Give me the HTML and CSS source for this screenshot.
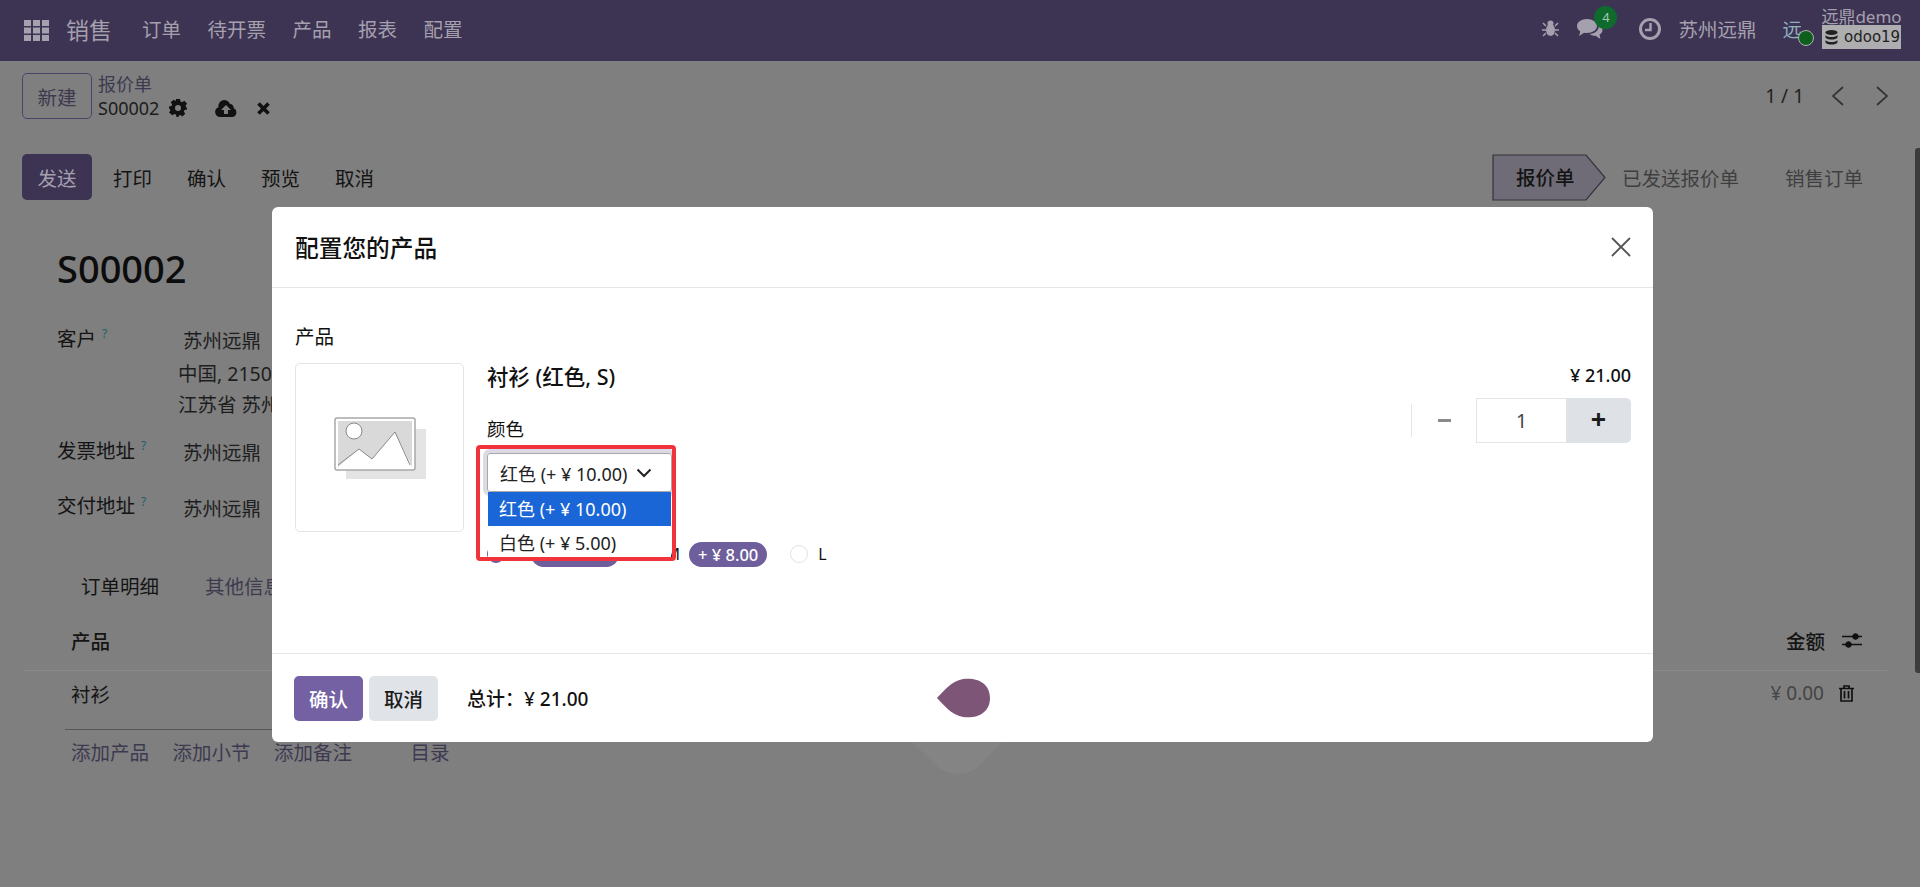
FILE: index.html
```html
<!DOCTYPE html>
<html lang="zh-CN">
<head>
    <meta charset="UTF-8">
    <title>报价单 S00002</title>
    <link rel="stylesheet" href="styles.css">
</head>
<body>
    <!-- Top bar -->
    <header class="navbar">
        <svg class="apps" width="25" height="21" viewBox="0 0 25 21" fill="#a5a0ae">
            <rect x="0" y="0" width="7" height="6"/><rect x="9" y="0" width="7" height="6"/><rect x="18" y="0" width="7" height="6"/>
            <rect x="0" y="7.500" width="7" height="6"/><rect x="9" y="7.500" width="7" height="6"/><rect x="18" y="7.500" width="7" height="6"/>
            <rect x="0" y="15" width="7" height="6"/><rect x="9" y="15" width="7" height="6"/><rect x="18" y="15" width="7" height="6"/>
        </svg>
        <span class="brand">销售</span>
        <nav class="menu">
            <span>订单</span><span>待开票</span><span>产品</span><span>报表</span><span>配置</span>
        </nav>
        <div class="systray">
            <svg class="bug" width="17" height="17" viewBox="0 0 17 17" fill="#a5a0ae">
                <ellipse cx="8.500" cy="10" rx="4.500" ry="6"/><circle cx="8.500" cy="3.500" r="3"/>
                <path d="M1 3l3 3M16 3l-3 3M0 10h4M17 10h-4M1 16l3-3M16 16l-3-3" stroke="#a5a0ae" stroke-width="1.500"/>
            </svg>
            <div class="chat">
                <svg width="27" height="24" viewBox="0 0 27 24" fill="#a5a0ae">
                    <path d="M11 2c5.500 0 10 3 10 7s-4.500 7-10 7c-1 0-2-.1-3-.3L3 19l1.300-4.500C2 13 1 11 1 9c0-4 4.500-7 10-7z"/>
                    <path d="M23 8c2 1.200 3.500 3 3.500 5 0 2-1.200 3.500-3 4.600l1 4.400-5-3.300c-2.500 0-4.600-.7-6-1.800 5.500 0 9.500-3.500 9.500-8.900z"/>
                </svg>
                <span class="badge">4</span>
            </div>
            <svg class="clock" width="24" height="24" viewBox="0 0 24 24" fill="none" stroke="#a5a0ae" stroke-width="3">
                <circle cx="12" cy="12" r="9.500"/><path d="M12.500 6v7H7" stroke-width="2.500"/>
            </svg>
            <span class="company">苏州远鼎</span>
            <div class="avatar">远<i class="online"></i></div>
            <div class="dbinfo">
                <span class="dbuser">远鼎demo</span>
                <span class="dbname">
                    <svg width="13" height="15" viewBox="0 0 13 15" fill="#222"><ellipse cx="6.500" cy="2.500" rx="6" ry="2.500"/><path d="M.5 5c1 1.500 3 2 6 2s5-.5 6-2v2.500c-1 1.500-3 2-6 2s-5-.5-6-2zM.5 10c1 1.500 3 2 6 2s5-.5 6-2v2.500c-1 1.500-3 2-6 2s-5-.5-6-2z"/></svg>
                    odoo19
                </span>
            </div>
        </div>
    </header>

    <!-- Control panel -->
    <section class="control">
        <button class="btn btn-outline">新建</button>
        <div class="crumbs">
            <span class="crumb-link">报价单</span>
            <div class="crumb-current">
                <span>S00002</span>
                <svg class="gear" width="18" height="18" viewBox="0 0 18 18" fill="#111">
                    <path fill-rule="evenodd" d="M7 0h4l.5 2.500 1.600.7 2.200-1.400 2.700 2.800-1.400 2.100.7 1.700L18 9v0l0 1.500-2.500.5-.7 1.600 1.400 2.200-2.800 2.700-2.100-1.400-1.300.5L9.500 18h-2l-.5-2.500-1.600-.6-2.100 1.400L0 13.500l1.400-2.100-.6-1.400L0 9.500v-2l2.500-.5.6-1.500L1.800 3.300 4.500.7l2.100 1.400z M9 6a3 3 0 1 0 0 6a3 3 0 0 0 0-6z"/>
                </svg>
                <svg class="cloud" width="22" height="17" viewBox="0 0 22 17" fill="#111">
                    <path fill-rule="evenodd" d="M5 17a5 5 0 0 1-1.500-9.700A6 6 0 0 1 15 4a3.500 3.500 0 0 1 3.600 4A4.700 4.700 0 0 1 17 17z M11 5l-5 5h3v4h4v-4h3z"/>
                </svg>
                <svg class="cross" width="13" height="13" viewBox="0 0 13 13" stroke="#111" stroke-width="3.600"><path d="M1.500 1.500l10 10M11.500 1.500l-10 10"/></svg>
            </div>
        </div>
        <div class="pager">
            <span>1 / 1</span>
            <svg width="14" height="20" viewBox="0 0 14 20" fill="none" stroke="#333" stroke-width="1.700"><path d="M12 1L2 10l10 9"/></svg>
            <svg width="14" height="20" viewBox="0 0 14 20" fill="none" stroke="#333" stroke-width="1.700"><path d="M2 1l10 9-10 9"/></svg>
        </div>
    </section>

    <section class="actions">
        <button class="btn btn-send">发送</button>
        <span class="action">打印</span>
        <span class="action">确认</span>
        <span class="action">预览</span>
        <span class="action">取消</span>
        <div class="status">
            <div class="status-current">
                <svg width="115" height="47" viewBox="0 0 115 47" fill="#6f6c78" stroke="#34323c" stroke-width="1.200"><path d="M1 1h93l19 22.500L94 46H1z"/></svg>
                <span>报价单</span>
            </div>
            <span class="status-next">已发送报价单</span>
            <span class="status-next">销售订单</span>
        </div>
    </section>

    <!-- Sale order form behind the dialog -->
    <main class="sheet">
        <h1 class="order-name">S00002</h1>
        <div class="field">
            <div class="field-label">客户<sup>?</sup></div>
            <div class="field-value">
                <div class="partner">苏州远鼎</div>
                <div>中国, 215000</div>
                <div>江苏省 苏州市</div>
            </div>
        </div>
        <div class="field field-second">
            <div class="field-label">发票地址<sup>?</sup></div>
            <div class="field-value"><div class="partner">苏州远鼎</div></div>
        </div>
        <div class="field field-third">
            <div class="field-label">交付地址<sup>?</sup></div>
            <div class="field-value"><div class="partner">苏州远鼎</div></div>
        </div>

        <div class="tabs">
            <span>订单明细</span>
            <span class="tab-off">其他信息</span>
        </div>

        <div class="lines-head">
            <span class="cell-name">产品</span>
            <span class="cell-total">金额</span>
            <svg width="20" height="17" viewBox="0 0 20 17" fill="#111" stroke="#111">
                <path d="M0 4.500h20M0 12.500h20" stroke-width="1.300"/><circle cx="13.500" cy="4.500" r="2.800"/><circle cx="6.500" cy="12.500" r="2.800"/>
            </svg>
        </div>
        <div class="lines-row">
            <span class="cell-name">衬衫</span>
            <span class="cell-price">¥ 0.00</span>
            <svg width="15" height="17" viewBox="0 0 15 17" fill="none" stroke="#111" stroke-width="1.700">
                <path d="M0 3.500h15M5 3.500V1h5v2.500M2 3.500V16h11V3.500M5.500 6v7.500M9.500 6v7.500"/>
            </svg>
        </div>
        <div class="lines-rule"></div>
        <div class="add-links">
            <span>添加产品</span><span>添加小节</span><span>添加备注</span><span class="catalog">目录</span>
        </div>
    </main>

    <div class="scrollbar"></div>

    <!-- Dialog -->
    <div class="modal">
        <div class="modal-head">
            <h2>配置您的产品</h2>
            <svg width="22" height="22" viewBox="0 0 22 22" stroke="#555" stroke-width="1.800"><path d="M2 2l18 18M20 2L2 20"/></svg>
        </div>
        <div class="modal-body">
            <div class="section-label">产品</div>
            <div class="product">
                <div class="thumb">
                    <svg width="92" height="62" viewBox="0 0 92 62">
                        <rect x="12" y="12" width="80" height="50" fill="#e4e4e4"/>
                        <rect x="1" y="1" width="80" height="52" rx="2" fill="#fff" stroke="#a8a8a8" stroke-width="1.500"/>
                        <rect x="4" y="4" width="74" height="46" fill="#d9d9d9"/>
                        <path d="M4 50l21-18 13 10 23-27 17 35z" fill="#fff"/>
                        <path d="M4 48l21-16 13 10 23-27 15 33" fill="none" stroke="#888"/>
                        <circle cx="20" cy="14" r="8" fill="#fff" stroke="#888"/>
                    </svg>
                </div>
                <div class="product-info">
                    <div class="product-name">衬衫 (红色, S)</div>
                    <div class="attr-label">颜色</div>
                    <div class="select-wrap">
                        <div class="select">
                            <span>红色 (+ ¥ 10.00)</span>
                            <svg width="16" height="10" viewBox="0 0 16 10" fill="none" stroke="#222" stroke-width="2"><path d="M1.500 1.500L8 8l6.500-6.500"/></svg>
                        </div>
                        <div class="options">
                            <div class="option option-on">红色 (+ ¥ 10.00)</div>
                            <div class="option">白色 (+ ¥ 5.00)</div>
                        </div>
                        <div class="redframe"></div>
                    </div>
                    <div class="sizes">
                        <i class="radio radio-on"></i>
                        <span class="size">S</span>
                        <span class="pill">+ ¥ 10.00</span>
                        <span class="size size-m">M</span>
                        <span class="pill pill-m">+ ¥ 8.00</span>
                        <i class="radio radio-l"></i>
                        <span class="size">L</span>
                    </div>
                </div>
                <div class="buy">
                    <div class="price">¥ 21.00</div>
                    <div class="qty">
                        <span class="qty-minus"><i></i></span>
                        <span class="qty-input">1</span>
                        <span class="qty-plus">+</span>
                    </div>
                </div>
            </div>
        </div>
        <div class="modal-foot">
            <button class="btn btn-ok">确认</button>
            <button class="btn btn-cancel">取消</button>
            <span class="total">总计：¥ 21.00</span>
            <svg class="cursor-drop" width="54" height="40" viewBox="0 0 54 40"><path d="M0 20C6 14 14 3 26 1c14-2 27 4 27 19s-13 21-27 19C14 37 6 26 0 20z" fill="#7c5577"/></svg>
        </div>
    </div>
    <svg class="smear" width="90" height="32" viewBox="0 0 90 32"><path d="M0 0h90L65 26c-12 8-25 8-38 0z" fill="#848484"/></svg>
</body>
</html>
```

FILE: styles.css
```css
* {
    box-sizing: border-box;
}

body {
    margin: 0;
    height: 887px;
    overflow: hidden;
    position: relative;
    background: #7f7f7f;
    color: #141414;
    font-family: "Noto Sans", "Noto Sans CJK SC", sans-serif;
    font-size: 19.5px;
}

.btn {
    font: inherit;
    border: none;
    border-radius: 5px;
    cursor: pointer;
}

/* top bar */
.navbar {
    display: flex;
    align-items: center;
    height: 61px;
    padding: 0 19px 4px 24px;
    background: #3d3353;
    color: #a5a0ae;
}

.apps {
    margin-top: 4px;
}

.brand {
    margin-left: 17px;
    font-size: 23px;
}

.menu {
    display: flex;
    gap: 26.5px;
    margin-left: 30px;
}

.systray {
    display: flex;
    align-items: center;
    margin-left: auto;
}

.bug {
    margin-right: 17px;
}

.chat {
    position: relative;
    width: 27px;
    height: 24px;
    margin-right: 35px;
}

.badge {
    position: absolute;
    left: 18px;
    top: -11px;
    width: 23px;
    height: 23px;
    border-radius: 50%;
    background: #0f6a2e;
    color: #a5c9ae;
    font-size: 13px;
    line-height: 23px;
    text-align: center;
}

.clock {
    margin-right: 16px;
}

.avatar {
    position: relative;
    margin-left: 26px;
    color: #8fb0bd;
}

.online {
    position: absolute;
    right: -12px;
    bottom: -3px;
    width: 16px;
    height: 16px;
    border-radius: 50%;
    background: #0d5f1b;
    border: 1px solid #b0b0b0;
}

.dbinfo {
    display: flex;
    flex-direction: column;
    align-items: center;
    margin-left: 20px;
    width: 79px;
}

.dbuser {
    font-size: 17px;
    line-height: 17px;
    height: 17px;
    white-space: nowrap;
}

.dbname {
    display: flex;
    align-items: center;
    gap: 6px;
    width: 79px;
    height: 24px;
    padding-left: 3px;
    background: #aeaeb0;
    color: #222;
    font-family: "DejaVu Sans", sans-serif;
    font-size: 15px;
}

/* control panel */
.control {
    display: flex;
    align-items: flex-start;
    margin-top: 12px;
    padding: 0 22px;
}

.btn-outline {
    width: 70px;
    height: 46px;
    background: transparent;
    border: 1px solid #49456a;
    color: #3d3a50;
}

.crumbs {
    display: flex;
    flex-direction: column;
    margin: -1px 0 0 6px;
    font-size: 18px;
    line-height: 24px;
}

.crumb-link {
    color: #3d3a50;
}

.crumb-current {
    display: flex;
    align-items: center;
    height: 24px;
    color: #1c1c1c;
}

.gear {
    margin-left: 10px;
}

.cloud {
    margin-left: 28px;
}

.cross {
    margin-left: 20px;
}

.pager {
    display: flex;
    align-items: center;
    margin-left: auto;
    height: 46px;
    padding-right: 9px;
    gap: 27px;
    color: #222;
    font-size: 19px;
}

.pager svg + svg {
    margin-left: 3px;
}

.actions {
    display: flex;
    align-items: center;
    height: 46px;
    margin-top: 34px;
    padding-left: 22px;
}

.btn-send {
    width: 70px;
    height: 46px;
    background: #3d3353;
    color: #a5a0ae;
    margin-right: 21px;
}

.action {
    margin-right: 35px;
}

.status {
    display: flex;
    align-items: center;
    margin-left: auto;
    padding-right: 57px;
}

.status-current {
    position: relative;
    width: 115px;
    height: 47px;
}

.status-current span {
    position: absolute;
    left: 24px;
    top: 0;
    line-height: 47px;
    font-weight: 500;
}

.status-next {
    margin-left: 15px;
    color: #3f3f3f;
}

.status-next + .status-next {
    margin-left: 46px;
}

/* form */
.sheet {
    padding-top: 43px;
}

.order-name {
    margin: 0 0 0 57px;
    font-size: 38px;
    font-weight: 500;
    line-height: 50px;
    color: #0c0c0c;
}

.field {
    display: flex;
    margin: 32px 0 0 57px;
    line-height: 31px;
}

.field-second {
    margin-top: 17px;
}

.field-third {
    margin-top: 22.5px;
}

.field-label {
    width: 121px;
    margin-top: -2.5px;
}

.field-label sup {
    margin-left: 6px;
    font-size: 12px;
    line-height: 0;
    color: #1c5e66;
}

.field-value {
    color: #1e1e1e;
}

.partner {
    padding-left: 5px;
    margin-bottom: 2px;
}

.tabs {
    display: flex;
    gap: 46px;
    margin: 46px 0 0 81px;
    line-height: 30px;
}

.tab-off {
    color: #3d3a50;
}

.lines-head {
    display: flex;
    align-items: center;
    height: 45.5px;
    margin: 24px 33px 0 24px;
    padding: 0 25px 15.5px 47px;
    border-bottom: 1px solid #8b8b8b;
    font-weight: 500;
}

.lines-row {
    display: flex;
    align-items: center;
    height: 58px;
    margin: 0 33px 0 65px;
    padding: 0 33px 14px 6px;
}

.lines-rule {
    width: 300px;
    margin-left: 65px;
    border-top: 1px solid #565656;
}

.cell-total {
    margin-left: auto;
    margin-right: 17px;
}

.cell-price {
    margin-left: auto;
    margin-right: 15px;
    color: #444;
    font-size: 19px;
}

.add-links {
    display: flex;
    gap: 23.5px;
    margin: 8px 0 0 71px;
    line-height: 30px;
    color: #3d3a50;
}

.catalog {
    margin-left: 35px;
}

.scrollbar {
    position: absolute;
    right: 0;
    top: 148px;
    width: 5px;
    height: 525px;
    background: #3c3c3c;
    border-radius: 3px 0 0 3px;
}

/* dialog */
.modal {
    position: absolute;
    left: 272px;
    top: 207px;
    display: flex;
    flex-direction: column;
    width: 1381px;
    height: 535px;
    background: #fff;
    border-radius: 6px;
    color: #111;
}

.modal-head {
    display: flex;
    align-items: center;
    justify-content: space-between;
    height: 81px;
    padding: 0 21px 0 23px;
    border-bottom: 1px solid #e6e6e6;
}

.modal-head h2 {
    margin: 0;
    font-size: 23.7px;
    font-weight: 500;
}

.modal-body {
    flex: 1;
    padding: 34px 22px 0 23px;
}

.section-label {
    line-height: 30px;
}

.product {
    display: flex;
    margin-top: 11px;
}

.thumb {
    display: flex;
    align-items: center;
    justify-content: center;
    width: 169px;
    height: 169px;
    border: 1px solid #e4e4e4;
    border-radius: 5px;
}

.product-info {
    width: 700px;
    margin-left: 23px;
    position: relative;
}

.product-name {
    font-size: 21.5px;
    font-weight: 500;
    line-height: 28px;
}

.attr-label {
    margin-top: 24px;
    line-height: 28px;
    font-size: 18.5px;
}

.select-wrap {
    position: relative;
    width: 185px;
    margin-top: 10px;
}

.select {
    display: flex;
    align-items: center;
    justify-content: space-between;
    height: 39px;
    padding: 0 19px 0 12px;
    border: 1px solid #a8a8a8;
    border-radius: 3px;
    box-shadow: 0 0 0 4px #dcdae4;
    font-size: 18px;
    color: #222;
}

.options {
    position: absolute;
    left: 1px;
    top: 39px;
    z-index: 2;
    width: 183px;
    background: #fff;
    font-size: 18px;
}

.option {
    height: 34px;
    padding-left: 11px;
    line-height: 34px;
    color: #222;
}

.option-on {
    background: #1a66d6;
    color: #fff;
}

.redframe {
    position: absolute;
    left: -11px;
    top: -8px;
    z-index: 3;
    width: 200px;
    height: 116px;
    border: 4px solid #f1333c;
    border-radius: 4px;
}

.sizes {
    display: flex;
    align-items: center;
    height: 26px;
    margin-top: 49px;
    font-size: 16px;
}

.radio {
    width: 18px;
    height: 18px;
    border-radius: 50%;
    border: 1px solid #e2e2e2;
    margin-right: 8px;
}

.radio-on {
    background: #6f5e9c;
    border-color: #6f5e9c;
}

.radio-l {
    margin-left: 23px;
    margin-right: 10px;
}

.size-m {
    margin-left: 47px;
}

.pill {
    display: inline-block;
    height: 25px;
    margin-left: 9px;
    padding: 0 9px;
    border-radius: 13px;
    background: #6f5e9c;
    color: #fff;
    font-size: 16.5px;
    font-weight: 500;
    line-height: 25px;
}

.buy {
    margin-left: auto;
    width: 220px;
}

.price {
    line-height: 24px;
    text-align: right;
    font-size: 18px;
    font-weight: 500;
}

.qty {
    display: flex;
    align-items: center;
    margin-top: 11px;
    height: 45px;
}

.qty-minus {
    display: flex;
    align-items: center;
    justify-content: center;
    width: 65px;
    height: 33px;
    border-left: 1px solid #e6e6e6;
}

.qty-minus i {
    width: 13px;
    height: 3px;
    background: #8a8a8a;
}

.qty-input {
    width: 90px;
    height: 45px;
    border: 1px solid #e4e4e4;
    border-right: none;
    text-align: center;
    line-height: 43px;
    color: #444;
}

.qty-plus {
    width: 65px;
    height: 45px;
    background: #dee2e7;
    border-radius: 0 5px 5px 0;
    text-align: center;
    font-size: 27px;
    font-weight: 700;
    line-height: 42px;
    color: #1c1c1c;
}

.modal-foot {
    display: flex;
    align-items: center;
    position: relative;
    height: 89px;
    padding: 0 22px;
    border-top: 1px solid #e8e8e8;
}

.btn-ok, .btn-cancel {
    width: 69px;
    height: 45px;
    font-weight: 500;
}

.btn-ok {
    background: #7361a3;
    color: #fff;
}

.btn-cancel {
    margin-left: 6px;
    background: #e0e4e9;
    color: #1c1c1c;
}

.total {
    margin-left: 29px;
    font-size: 19px;
    font-weight: 500;
}

.cursor-drop {
    position: absolute;
    left: 665px;
    top: 24px;
}

.smear {
    position: absolute;
    left: 912px;
    top: 742px;
}
```
